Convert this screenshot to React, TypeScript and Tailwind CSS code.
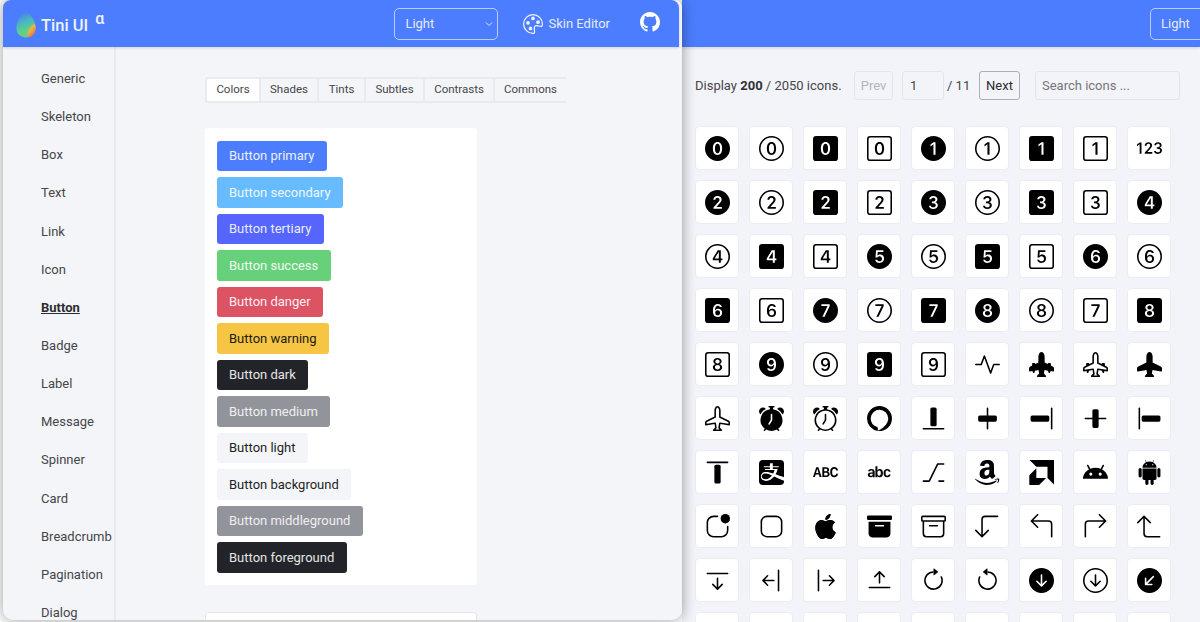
import React from "react";
import {
  Bs0CircleFill, Bs0Circle, Bs0SquareFill, Bs0Square, Bs1CircleFill, Bs1Circle, Bs1SquareFill, Bs1Square, Bs123,
  Bs2CircleFill, Bs2Circle, Bs2SquareFill, Bs2Square, Bs3CircleFill, Bs3Circle, Bs3SquareFill, Bs3Square, Bs4CircleFill,
  Bs4Circle, Bs4SquareFill, Bs4Square, Bs5CircleFill, Bs5Circle, Bs5SquareFill, Bs5Square, Bs6CircleFill, Bs6Circle,
  Bs6SquareFill, Bs6Square, Bs7CircleFill, Bs7Circle, Bs7SquareFill, Bs8CircleFill, Bs8Circle, Bs7Square, Bs8SquareFill,
  Bs8Square, Bs9CircleFill, Bs9Circle, Bs9SquareFill, Bs9Square, BsActivity, BsAirplaneEnginesFill, BsAirplaneEngines, BsAirplaneFill,
  BsAirplane, BsAlarmFill, BsAlarm, BsAlexa, BsAlignBottom, BsAlignCenter, BsAlignEnd, BsAlignMiddle, BsAlignStart,
  BsAlignTop, BsAlipay, BsAlphabetUppercase, BsAlphabet, BsAlt, BsAmazon, BsAmd, BsAndroid, BsAndroid2,
  BsAppIndicator, BsApp, BsApple, BsArchiveFill, BsArchive, BsArrow90DegDown, BsArrow90DegLeft, BsArrow90DegRight, BsArrow90DegUp,
  BsArrowBarDown, BsArrowBarLeft, BsArrowBarRight, BsArrowBarUp, BsArrowClockwise, BsArrowCounterclockwise, BsArrowDownCircleFill, BsArrowDownCircle, BsArrowDownLeftCircleFill,
  BsPalette, BsGithub,
} from "react-icons/bs";

const icons = [
  Bs0CircleFill, Bs0Circle, Bs0SquareFill, Bs0Square, Bs1CircleFill, Bs1Circle, Bs1SquareFill, Bs1Square, Bs123,
  Bs2CircleFill, Bs2Circle, Bs2SquareFill, Bs2Square, Bs3CircleFill, Bs3Circle, Bs3SquareFill, Bs3Square, Bs4CircleFill,
  Bs4Circle, Bs4SquareFill, Bs4Square, Bs5CircleFill, Bs5Circle, Bs5SquareFill, Bs5Square, Bs6CircleFill, Bs6Circle,
  Bs6SquareFill, Bs6Square, Bs7CircleFill, Bs7Circle, Bs7SquareFill, Bs8CircleFill, Bs8Circle, Bs7Square, Bs8SquareFill,
  Bs8Square, Bs9CircleFill, Bs9Circle, Bs9SquareFill, Bs9Square, BsActivity, BsAirplaneEnginesFill, BsAirplaneEngines, BsAirplaneFill,
  BsAirplane, BsAlarmFill, BsAlarm, BsAlexa, BsAlignBottom, BsAlignCenter, BsAlignEnd, BsAlignMiddle, BsAlignStart,
  BsAlignTop, BsAlipay, BsAlphabetUppercase, BsAlphabet, BsAlt, BsAmazon, BsAmd, BsAndroid, BsAndroid2,
  BsAppIndicator, BsApp, BsApple, BsArchiveFill, BsArchive, BsArrow90DegDown, BsArrow90DegLeft, BsArrow90DegRight, BsArrow90DegUp,
  BsArrowBarDown, BsArrowBarLeft, BsArrowBarRight, BsArrowBarUp, BsArrowClockwise, BsArrowCounterclockwise, BsArrowDownCircleFill, BsArrowDownCircle, BsArrowDownLeftCircleFill,
];

const nav = ["Generic", "Skeleton", "Box", "Text", "Link", "Icon", "Button", "Badge", "Label", "Message", "Spinner", "Card", "Breadcrumb", "Pagination", "Dialog"];
const tabs = [
  { t: "Colors", c: "w-[54px] bg-white rounded-l-[3px]" },
  { t: "Shades", c: "w-[58px]" },
  { t: "Tints", c: "w-[47px]" },
  { t: "Subtles", c: "w-[59px]" },
  { t: "Contrasts", c: "w-[70px]" },
  { t: "Commons", c: "w-[73px]" },
];
const buttons = [
  { t: "Button primary", c: "bg-[#4c7dfe] text-[#e9efff]" },
  { t: "Button secondary", c: "bg-[#66bcff] text-[#eef7ff]" },
  { t: "Button tertiary", c: "bg-[#5565fd] text-[#e9ebff]" },
  { t: "Button success", c: "bg-[#66d07a] text-[#effaf1]" },
  { t: "Button danger", c: "bg-[#dc5363] text-[#fdeef0]" },
  { t: "Button warning", c: "bg-[#f7c544] text-[#1c1a12]" },
  { t: "Button dark", c: "bg-[#232429] text-[#e4e4e6]" },
  { t: "Button medium", c: "bg-[#92949c] text-[#eeeef0]" },
  { t: "Button light", c: "bg-[#f4f5f8] text-[#1e1f23]" },
  { t: "Button background", c: "bg-[#f4f5f9] text-[#1e1f23]" },
  { t: "Button middleground", c: "bg-[#92949c] text-[#eeeef0]" },
  { t: "Button foreground", c: "bg-[#232429] text-[#e4e4e6]" },
];

function Logo() {
  return (
    <svg width="20" height="26" viewBox="0 0 20 26" className="shrink-0 mt-[2px]">
      <defs>
        <linearGradient id="egg" x1="0.35" y1="0" x2="0.65" y2="1">
          <stop offset="0" stopColor="#4f7fe8" />
          <stop offset="0.35" stopColor="#46b6c4" />
          <stop offset="0.7" stopColor="#5fd08a" />
          <stop offset="1" stopColor="#7cc47a" />
        </linearGradient>
        <linearGradient id="eggb" x1="0" y1="0" x2="0.6" y2="1">
          <stop offset="0" stopColor="#8fcf60" />
          <stop offset="0.55" stopColor="#f0b040" />
          <stop offset="1" stopColor="#e8664a" />
        </linearGradient>
      </defs>
      <path d="M10 0.5C14.5 1.5 19.5 9 19.5 16C19.5 22 15.5 25.5 10 25.5C4.5 25.5 0.5 22 0.5 16C0.5 9 5 1.5 10 0.5Z" fill="url(#egg)" />
      <path d="M19 11.5C19.4 13 19.5 14.5 19.5 16C19.5 21 16.8 24.2 12.6 25.2C10.5 22 12 14.5 19 11.5Z" fill="url(#eggb)" />
    </svg>
  );
}

function Select({ full }: { full?: boolean }) {
  return (
    <div className={`h-[32px] rounded-[5px] border border-[#b9cdfd] flex items-center justify-between pl-[10px] pr-[3px] text-[13px] text-[#e4ebff] ${full ? "w-[104px]" : "w-[60px] mr-[-10px] shrink-0"}`}>
      <span>Light</span>
      {full && (
        <svg width="10" height="10" viewBox="0 0 10 10" fill="none" stroke="#dbe5ff" strokeWidth="1"><path d="M2 3.5 5 6.5 8 3.5" /></svg>
      )}
    </div>
  );
}

export default function App() {
  return (
    <div className="h-[622px] w-[1200px] overflow-hidden bg-white flex font-['Roboto',sans-serif] text-[#3a3b40]">
      <div className="relative z-10 ml-[3px] w-[679px] h-[620px] shrink-0 overflow-hidden rounded-b-[10px] rounded-t-[8px] bg-[#f4f5f9] flex flex-col shadow-[0_0_14px_rgba(0,0,0,0.4)]">
        <header className="h-[47px] shrink-0 bg-[#4c7dfe] mr-[3px] rounded-tr-[8px] flex items-center pl-[13px] text-white shadow-[0_1px_3px_rgba(0,0,0,0.15)] relative">
          <Logo />
          <span className="ml-[5px] mt-[5px] text-[16.5px] font-medium text-[#eef3ff]">Tini UI</span>
          <span className="ml-[7px] mb-[9px] text-[16px] font-medium text-[#eef3ff]">α</span>
          <div className="ml-auto flex items-center">
            <Select full />
            <BsPalette className="ml-[25px] text-[20px] text-[#eef3ff]" />
            <span className="ml-[5px] text-[13px] text-[#e4ebff]">Skin Editor</span>
            <BsGithub className="ml-[30px] mr-[19px] mb-[3px] text-[20px] text-white" />
          </div>
        </header>
        <div className="flex-1 flex min-h-0">
          <nav className="w-[113px] shrink-0 border-r-2 border-[#e9eaee] pl-[38px] pt-[13px] flex flex-col text-[13px] text-[#45464b]">
            {nav.map((n) => (
              <div key={n} className={`h-[38.15px] shrink-0 leading-[38px] whitespace-nowrap ${n === "Button" ? "font-bold underline text-[#2c2d31]" : ""}`}>{n}</div>
            ))}
          </nav>
          <main className="flex-1 pl-[89px] pt-[30px]">
            <div className="flex h-[26px] text-[11.5px] text-[#45464b]">
              {tabs.map((t) => (
                <div key={t.t} className={`flex items-center justify-center border-y-2 border-l-2 border-[#e9eaee] ${t.c}`}>{t.t}</div>
              ))}
            </div>
            <div className="mt-[25px] w-[272px] rounded-[3px] bg-white px-[12px] py-[12.5px] flex flex-col items-start gap-[6px]">
              {buttons.map((b) => (
                <div key={b.t} className={`h-[30.5px] rounded-[3px] pl-[12px] pr-[12.5px] flex items-center text-[13px] whitespace-nowrap ${b.c}`}>{b.t}</div>
              ))}
            </div>
            <div className="mt-[27px] w-[272px] h-[20px] rounded-t-[3px] bg-white border border-[#e4e5ea]" />
          </main>
        </div>
      </div>
      <div className="flex-1 min-w-0 h-[622px] bg-[#f3f4f9] flex flex-col">
        <header className="h-[47px] shrink-0 bg-[#4c7dfe] flex items-center justify-end shadow-[0_1px_3px_rgba(0,0,0,0.15)]">
          <Select />
        </header>
        <div className="pl-[13px]">
          <div className="h-[29px] mt-[24px] flex items-center text-[13px] text-[#45464b]">
            <span className="w-[159px] shrink-0">Display <b className="text-[#303136]">200</b> / 2050 icons.</span>
            <div className="w-[39px] h-[29px] rounded-[3px] border border-[#e4e5ea] flex items-center justify-center text-[#b4b5ba]">Prev</div>
            <div className="ml-[9px] w-[42px] h-[29px] rounded-[3px] border border-[#e4e5ea] flex items-center pl-[7px]">1</div>
            <span className="w-[35px] pl-[3px]">/ 11</span>
            <div className="w-[41px] h-[29px] rounded-[3px] border border-[#aeafb4] flex items-center justify-center text-[#2c2d31]">Next</div>
            <div className="ml-[15px] w-[145px] h-[29px] rounded-[3px] border border-[#e4e5ea] flex items-center pl-[6px] text-[#75767b]">Search icons ...</div>
          </div>
          <div className="mt-[26px] grid grid-cols-[repeat(9,44px)] gap-[10px] text-black">
            {icons.map((I, i) => (
              <div key={i} className="w-[44px] h-[44px] rounded-[4px] bg-white border border-[#ebecf0] flex items-center justify-center">
                <I className="text-[25px]" />
              </div>
            ))}
            {Array.from({ length: 9 }).map((_, i) => (
              <div key={i} className="w-[44px] h-[44px] rounded-[4px] bg-white border border-[#ebecf0]" />
            ))}
          </div>
        </div>
      </div>
    </div>
  );
}
